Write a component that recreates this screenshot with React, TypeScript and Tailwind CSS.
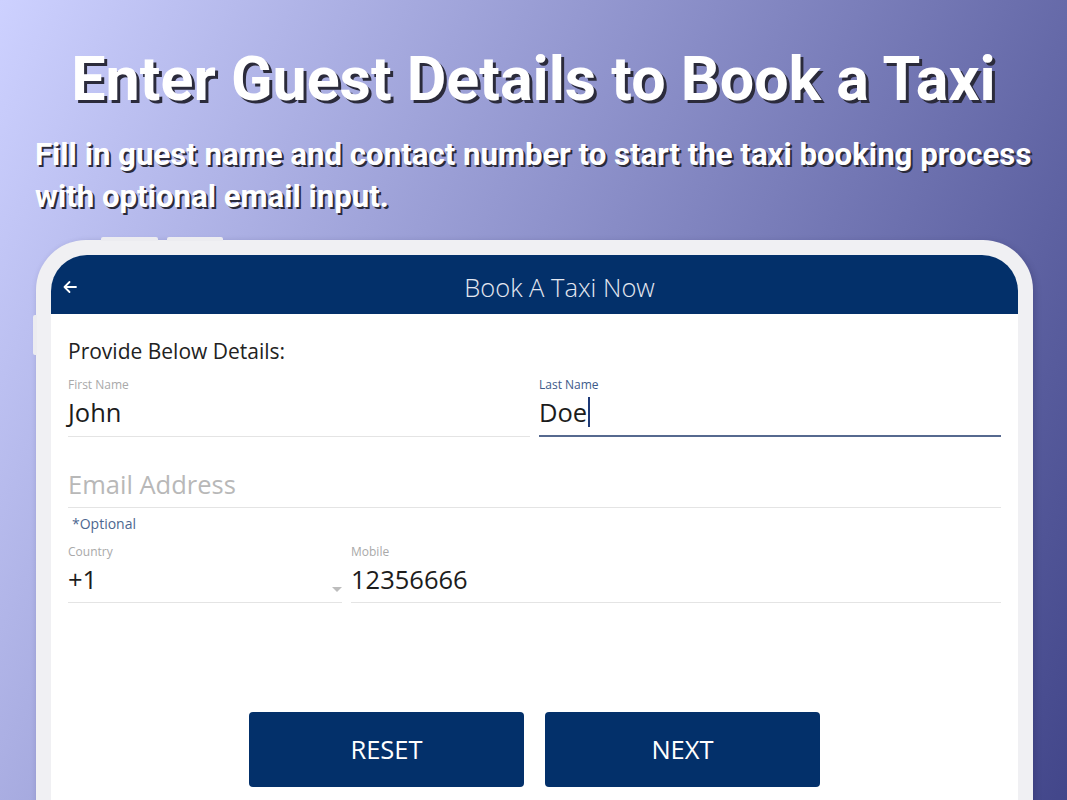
import React from 'react';

const navy = 'bg-[#03306a]';

function Field({
  label,
  value,
  placeholder,
  active,
  children,
}: {
  label?: string;
  value?: string;
  placeholder?: string;
  active?: boolean;
  children?: React.ReactNode;
}) {
  return (
    <div
      className={`relative ${
        active ? 'border-b-2 border-[#56698f]' : 'border-b border-[#e4e4e4]'
      } pb-[7px]`}
    >
      {label && (
        <div
          className={`text-[12px] leading-[14px] mt-[2px] mb-[4px] ${
            active ? 'text-[#3d5a8a]' : 'text-[#a9a9a9]'
          }`}
        >
          {label}
        </div>
      )}
      <div className="flex items-center h-[32px] text-[25.5px] leading-[32px]">
        {value ? (
          <span className="text-[#1c1c1c]">{value}</span>
        ) : (
          <span className="text-[#b8b8b8]">{placeholder}</span>
        )}
        {active && <span className="ml-[1px] w-[2px] h-[30px] bg-[#1e3a78]" />}
      </div>
      {children}
    </div>
  );
}

export default function App() {
  return (
    <div className="w-[1067px] h-[800px] overflow-hidden bg-[linear-gradient(115deg,#cdd1ff_0%,#8f93cc_45%,#42468a_100%)] font-['Open_Sans',sans-serif]">
      <h1 className="pt-[44px] text-center text-[61px] leading-[70px] font-bold text-white font-['Roboto',sans-serif] [text-shadow:3px_3px_0_#2b2b3b]">
        Enter Guest Details to Book a Taxi
      </h1>
      <p className="mt-[20px] pl-[35px] pr-[20px] text-[31.2px] leading-[42px] font-bold text-white font-['Roboto',sans-serif] [text-shadow:2px_2px_0_#2b2b3b]">
        Fill in guest name and contact number to start the taxi booking process with optional email input.
      </p>

      <div className="relative mt-[22px] ml-[36px] w-[997px] h-[700px] rounded-[50px] bg-[#f0f0f3] p-[15px] shadow-[2px_2px_6px_rgba(30,30,80,0.25)]">
        <div className="absolute -top-[3px] left-[65px] w-[57px] h-[4px] rounded-t-[2px] bg-[#ececf0]" />
        <div className="absolute -top-[3px] left-[131px] w-[56px] h-[4px] rounded-t-[2px] bg-[#ececf0]" />
        <div className="absolute top-[75px] -left-[3px] w-[4px] h-[40px] rounded-l-[2px] bg-[#ececf0]" />

        <div className="h-full rounded-t-[36px] overflow-hidden bg-white">
          <div className={`${navy} h-[59px] flex items-center text-white`}>
            <div className="w-[50px] pl-[11px] pt-[5px] flex items-center">
              <svg width="16" height="16" viewBox="0 0 16 16" fill="none" stroke="currentColor" strokeWidth="1.8" strokeLinecap="round" strokeLinejoin="round">
                <path d="M14 8H2.5M7.5 3L2.5 8l5 5" />
              </svg>
            </div>
            <div className="flex-1 pt-[5px] text-center text-[25.5px] leading-[32px] font-light text-[#e3e7f0]">Book A Taxi Now</div>
          </div>

          <div className="px-[17px] pt-[25px]">
            <div className="text-[21px] leading-[24px] text-[#222]">Provide Below Details:</div>

            <div className="mt-[13px] grid grid-cols-2 gap-[9px]">
              <Field label="First Name" value="John" />
              <Field label="Last Name" value="Doe" active />
            </div>

            <div className="mt-[31px]">
              <Field placeholder="Email Address" />
            </div>
            <div className="mt-[7px] pl-[4px] text-[14px] leading-[18px] text-[#4d6790]">*Optional</div>

            <div className="mt-[10px] grid grid-cols-[274px_1fr] gap-[9px]">
              <Field label="Country" value="+1">
                <div className="absolute right-0 bottom-[10px] w-0 h-0 border-l-[5px] border-r-[5px] border-t-[5px] border-l-transparent border-r-transparent border-t-[#bdbdbd]" />
              </Field>
              <Field label="Mobile" value="12356666" />
            </div>

            <div className="mt-[109px] flex justify-center gap-[21px]">
              <button className={`${navy} w-[275px] h-[75px] rounded-[4px] text-white text-[25.5px]`}>RESET</button>
              <button className={`${navy} w-[275px] h-[75px] rounded-[4px] text-white text-[25.5px]`}>NEXT</button>
            </div>
          </div>
        </div>
      </div>
    </div>
  );
}
